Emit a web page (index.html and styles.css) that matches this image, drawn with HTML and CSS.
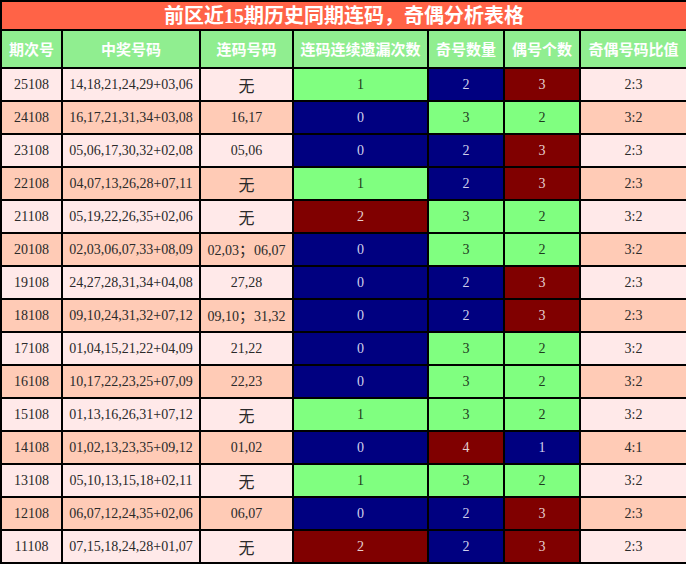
FILE: index.html
```html
<!DOCTYPE html>
<html lang="zh-CN">
<head>
<meta charset="utf-8">
<title>前区近15期历史同期连码，奇偶分析表格</title>
<link rel="stylesheet" href="styles.css">
</head>
<body>
<table class="sheet">
  <colgroup>
    <col class="c1"><col class="c2"><col class="c3"><col class="c4"><col class="c5"><col class="c6"><col class="c7">
  </colgroup>
  <thead>
    <tr class="title-row"><th colspan="7" class="title">前区近15期历史同期连码，奇偶分析表格</th></tr>
    <tr class="head-row">
      <th>期次号</th><th>中奖号码</th><th>连码号码</th><th>连码连续遗漏次数</th><th>奇号数量</th><th>偶号个数</th><th>奇偶号码比值</th>
    </tr>
  </thead>
  <tbody>
    <tr class="odd"><td>25108</td><td>14,18,21,24,29+03,06</td><td class="cjk">无</td><td class="g">1</td><td class="n">2</td><td class="m">3</td><td>2:3</td></tr>
    <tr class="even"><td>24108</td><td>16,17,21,31,34+03,08</td><td>16,17</td><td class="n">0</td><td class="g">3</td><td class="g">2</td><td>3:2</td></tr>
    <tr class="odd"><td>23108</td><td>05,06,17,30,32+02,08</td><td>05,06</td><td class="n">0</td><td class="n">2</td><td class="m">3</td><td>2:3</td></tr>
    <tr class="even"><td>22108</td><td>04,07,13,26,28+07,11</td><td class="cjk">无</td><td class="g">1</td><td class="n">2</td><td class="m">3</td><td>2:3</td></tr>
    <tr class="odd"><td>21108</td><td>05,19,22,26,35+02,06</td><td class="cjk">无</td><td class="m">2</td><td class="g">3</td><td class="g">2</td><td>3:2</td></tr>
    <tr class="even"><td>20108</td><td>02,03,06,07,33+08,09</td><td>02,03<span class="semi">；</span>06,07</td><td class="n">0</td><td class="g">3</td><td class="g">2</td><td>3:2</td></tr>
    <tr class="odd"><td>19108</td><td>24,27,28,31,34+04,08</td><td>27,28</td><td class="n">0</td><td class="n">2</td><td class="m">3</td><td>2:3</td></tr>
    <tr class="even"><td>18108</td><td>09,10,24,31,32+07,12</td><td>09,10<span class="semi">；</span>31,32</td><td class="n">0</td><td class="n">2</td><td class="m">3</td><td>2:3</td></tr>
    <tr class="odd"><td>17108</td><td>01,04,15,21,22+04,09</td><td>21,22</td><td class="n">0</td><td class="g">3</td><td class="g">2</td><td>3:2</td></tr>
    <tr class="even"><td>16108</td><td>10,17,22,23,25+07,09</td><td>22,23</td><td class="n">0</td><td class="g">3</td><td class="g">2</td><td>3:2</td></tr>
    <tr class="odd"><td>15108</td><td>01,13,16,26,31+07,12</td><td class="cjk">无</td><td class="g">1</td><td class="g">3</td><td class="g">2</td><td>3:2</td></tr>
    <tr class="even"><td>14108</td><td>01,02,13,23,35+09,12</td><td>01,02</td><td class="n">0</td><td class="m">4</td><td class="n">1</td><td>4:1</td></tr>
    <tr class="odd"><td>13108</td><td>05,10,13,15,18+02,11</td><td class="cjk">无</td><td class="g">1</td><td class="g">3</td><td class="g">2</td><td>3:2</td></tr>
    <tr class="even"><td>12108</td><td>06,07,12,24,35+02,06</td><td>06,07</td><td class="n">0</td><td class="n">2</td><td class="m">3</td><td>2:3</td></tr>
    <tr class="odd"><td>11108</td><td>07,15,18,24,28+01,07</td><td class="cjk">无</td><td class="m">2</td><td class="n">2</td><td class="m">3</td><td>2:3</td></tr>
  </tbody>
</table>
</body>
</html>
```
FILE: styles.css
```css
html, body {
  margin: 0;
  padding: 0;
  background: #ffffff;
}

.sheet {
  width: 686px;
  table-layout: fixed;
  border-collapse: collapse;
  font-family: "Liberation Serif", "Noto Sans CJK SC", serif;
  font-size: 14px;
  color: #2a2a2a;
}

.c1 { width: 61px; }
.c2 { width: 138px; }
.c3 { width: 93px; }
.c4 { width: 135px; }
.c5 { width: 76px; }
.c6 { width: 76px; }
.c7 { width: 107px; }

.sheet th,
.sheet td {
  border: 2px solid #000;
  padding: 0;
  text-align: center;
  vertical-align: middle;
  overflow: hidden;
  white-space: nowrap;
}

.title-row { height: 29px; }
.title {
  background: #ff6347;
  color: #fff;
  font-family: "Liberation Serif", "Noto Sans CJK SC", serif;
  font-size: 20px;
  font-weight: bold;
  line-height: 24px;
}

.head-row { height: 38px; }
.head-row th {
  background: #90ee90;
  color: #fff;
  font-family: "Noto Sans CJK SC", sans-serif;
  font-size: 15px;
  font-weight: bold;
  line-height: 20px;
}

.sheet tbody tr { height: 33px; }
.sheet tbody td { line-height: 18px; }

.odd td { background: #ffe9e9; }
.even td { background: #ffcbb6; }

.cjk {
  font-family: "Noto Sans CJK SC", sans-serif;
  font-size: 16px;
}
.semi {
  font-family: "Noto Sans CJK SC", sans-serif;
  font-size: 15px;
}

.sheet tr td.g { background: #80ff80; color: #1e3a1e; }
.sheet tr td.n { background: #000080; color: #d0d0ec; }
.sheet tr td.m { background: #800000; color: #e6d0d0; }
```
